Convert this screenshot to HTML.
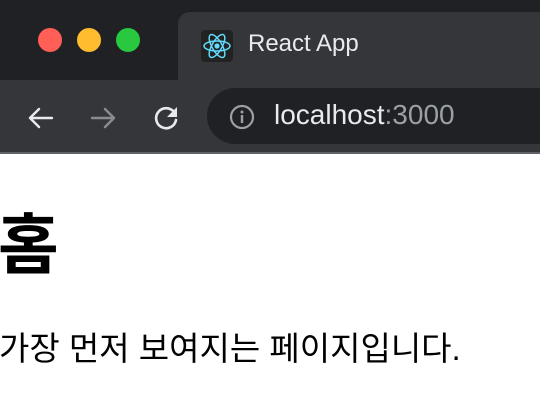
<!DOCTYPE html>
<html><head><meta charset="utf-8"><style>
*{margin:0;padding:0;box-sizing:border-box}
body{width:540px;height:400px;overflow:hidden;background:#fff;position:relative;font-family:"Liberation Sans","Noto Sans CJK KR",sans-serif}
.top{position:absolute;left:0;top:0;width:540px;height:80px;background:#202124}
.tab{position:absolute;left:178px;top:12px;width:380px;height:70px;background:#35363a;border-radius:12px 12px 0 0}
.tl{position:absolute;top:28px;width:24px;height:24px;border-radius:50%}
.bar{position:absolute;left:0;top:80px;width:540px;height:72px;background:#35363a}
.line{position:absolute;left:0;top:152px;width:540px;height:2px;background:#5f6368}
.addr{position:absolute;left:207px;top:88px;width:400px;height:56px;background:#202124;border-radius:28px}
.t{position:absolute;color:#fff;white-space:nowrap}
</style></head><body>
<div class="top"></div>
<div class="tab"></div>
<div class="tl" style="left:38px;background:#ff5f57"></div>
<div class="tl" style="left:77px;background:#febc2e"></div>
<div class="tl" style="left:116px;background:#28c840"></div>
<div style="position:absolute;left:201px;top:30px;width:32px;height:32px;background:#222;border-radius:4px"></div>
<svg style="position:absolute;left:201px;top:30px" width="32" height="32" viewBox="-16 -16 32 32"><g fill="none" stroke="#61dafb" stroke-width="1.5"><ellipse rx="13" ry="5"/><ellipse rx="13" ry="5" transform="rotate(60)"/><ellipse rx="13" ry="5" transform="rotate(120)"/></g><circle r="2.6" fill="#61dafb"/></svg>
<div class="t" style="left:248px;top:30px;font-size:24px;color:#e8eaed">React App</div>
<div class="bar"></div>
<div class="line"></div>
<svg style="position:absolute;left:26px;top:103px" width="30" height="30" viewBox="0 0 30 30"><g fill="none" stroke="#e8eaed" stroke-width="2.4" stroke-linecap="round" stroke-linejoin="round"><path d="M26 15H4M13 6L4 15l9 9"/></g></svg>
<svg style="position:absolute;left:88px;top:103px" width="30" height="30" viewBox="0 0 30 30"><g fill="none" stroke="#8a8b8e" stroke-width="2.4" stroke-linecap="round" stroke-linejoin="round"><path d="M4 15h22M17 6l9 9-9 9"/></g></svg>
<svg style="position:absolute;left:150px;top:102px" width="32" height="32" viewBox="0 0 32 32"><path d="M24 10A10 10 0 1 0 26 18" fill="none" stroke="#e8eaed" stroke-width="2.6" stroke-linecap="round"/><path d="M27 5v10H17z" fill="#e8eaed"/></svg>
<div class="addr"></div>
<svg style="position:absolute;left:229px;top:104px" width="26" height="26" viewBox="0 0 26 26"><circle cx="13" cy="13" r="11" fill="none" stroke="#9aa0a6" stroke-width="2.2"/><rect x="11.8" y="11" width="2.4" height="8" fill="#9aa0a6"/><circle cx="13" cy="8" r="1.5" fill="#9aa0a6"/></svg>
<div class="t" style="left:274px;top:99px;font-size:28px;color:#e8eaed">localhost<span style="color:#9aa0a6">:3000</span></div>
<div class="t" style="left:-2px;top:192px;font-size:66px;font-weight:bold;color:#000">홈</div>
<div class="t" style="left:-1px;top:322px;font-size:33px;color:#000">가장 먼저 보여지는 페이지입니다.</div>
</body></html>
